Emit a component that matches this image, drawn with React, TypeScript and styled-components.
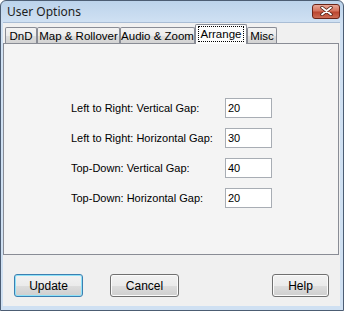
import React from "react";
import styled, { createGlobalStyle } from "styled-components";

const GlobalStyle = createGlobalStyle`
  html, body {
    margin: 0;
    padding: 0;
    background: #ffffff;
  }
`;

const Window = styled.div`
  width: 344px;
  height: 311px;
  box-sizing: border-box;
  border: 1px solid #4c5d73;
  border-radius: 6px 6px 0 0;
  background: linear-gradient(to bottom, #bcd3eb 0px, #d0e1f3 22px, #cfe0f2 100%);
  display: flex;
  flex-direction: column;
  padding: 0 3px 4px 2px;
  font-family: "Liberation Sans", Arial, sans-serif;
  white-space: nowrap;
`;

const TitleBar = styled.div`
  height: 21px;
  display: flex;
  align-items: center;
  justify-content: space-between;
  padding-left: 4px;
`;

const Title = styled.span`
  font-family: "Noto Sans", "Open Sans", sans-serif;
  font-size: 12px;
  color: #1e1e1e;
  margin-top: -1px;
`;

const CloseButton = styled.div`
  width: 28px;
  height: 15px;
  margin-top: -1px;
  box-sizing: border-box;
  border: 1px solid #6b2418;
  border-radius: 3px;
  background: linear-gradient(to bottom, #e9a797 0%, #d4735e 45%, #bb4630 55%, #cc6c55 100%);
  display: flex;
  align-items: center;
  justify-content: center;
`;

const Client = styled.div`
  flex: 1;
  background: #f0f0f0;
  border-top: 1px solid #a9bdd5;
  display: flex;
  flex-direction: column;
`;

const TabStrip = styled.div`
  display: flex;
  align-items: flex-end;
  height: 20px;
  padding-left: 2px;
  position: relative;
  z-index: 1;
`;

const Tab = styled.div<{ $active?: boolean; $w: number }>`
  box-sizing: border-box;
  width: ${(p) => p.$w}px;
  height: ${(p) => (p.$active ? "20px" : "16px")};
  margin-bottom: ${(p) => (p.$active ? "-1px" : "0")};
  border: 1px solid #898c95;
  border-bottom: none;
  border-radius: 2px 2px 0 0;
  background: ${(p) =>
    p.$active
      ? "#fcfcfc"
      : "linear-gradient(to bottom, #f3f3f3 0%, #ececec 50%, #dedede 51%, #d3d3d3 100%)"};
  font-size: 11.5px;
  color: #000;
  display: flex;
  align-items: center;
  justify-content: center;
  position: relative;
  z-index: ${(p) => (p.$active ? 2 : 0)};
`;

const FocusRing = styled.span`
  border: 1px dotted #000;
  padding: 0 2px;
  line-height: 14px;
  margin-top: -1px;
`;

const Panel = styled.div`
  height: 212px;
  margin-right: 1px;
  box-sizing: border-box;
  border: 1px solid #898c95;
  background: #f4f4f4;
  display: flex;
  flex-direction: column;
  padding: 54px 0 0 67px;
  gap: 10px;
`;

const Row = styled.div`
  display: flex;
  align-items: center;
  height: 20px;
`;

const Label = styled.span`
  width: 154px;
  font-size: 11px;
  color: #000;
`;

const NumberBox = styled.div`
  width: 47px;
  height: 20px;
  box-sizing: border-box;
  border: 1px solid #a8adb4;
  background: #fff;
  font-size: 11px;
  padding-left: 2px;
  display: flex;
  align-items: center;
`;

const ButtonRow = styled.div`
  display: flex;
  align-items: center;
  padding: 19px 11px 0 11px;
  gap: 27px;
`;

const Button = styled.div<{ $default?: boolean; $push?: boolean }>`
  width: ${(p) => (p.$push ? "57px" : "69px")};
  height: 23px;
  box-sizing: border-box;
  margin-left: ${(p) => (p.$push ? "auto" : "0")};
  border: 1px solid ${(p) => (p.$default ? "#3c7fb1" : "#707070")};
  border-radius: 3px;
  box-shadow: ${(p) => (p.$default ? "inset 0 0 0 1px #8fe2f8" : "inset 0 0 0 1px #fbfbfb")};
  background: linear-gradient(to bottom, #f2f2f2 0%, #ebebeb 50%, #dddddd 51%, #cfcfcf 100%);
  font-size: 12px;
  color: #000;
  display: flex;
  align-items: center;
  justify-content: center;
`;

const rows = [
  { label: "Left to Right: Vertical Gap:", value: "20" },
  { label: "Left to Right: Horizontal Gap:", value: "30" },
  { label: "Top-Down: Vertical Gap:", value: "40" },
  { label: "Top-Down: Horizontal Gap:", value: "20" },
];

const tabs = [
  { name: "DnD", w: 32 },
  { name: "Map & Rollover", w: 83 },
  { name: "Audio & Zoom", w: 75 },
  { name: "Arrange", w: 52 },
  { name: "Misc", w: 30 },
];

export default function App() {
  return (
    <>
      <GlobalStyle />
      <Window>
        <TitleBar>
          <Title>User Options</Title>
          <CloseButton>
            <svg width="13" height="10" viewBox="0 0 13 10">
              <path
                d="M2 1.5 L11 8.5 M11 1.5 L2 8.5"
                stroke="#4a1a10"
                strokeWidth="3.4"
                strokeLinecap="round"
              />
              <path
                d="M2 1.5 L11 8.5 M11 1.5 L2 8.5"
                stroke="#ffffff"
                strokeWidth="1.8"
                strokeLinecap="round"
              />
            </svg>
          </CloseButton>
        </TitleBar>
        <Client>
          <TabStrip>
            {tabs.map((t) => (
              <Tab key={t.name} $w={t.w} $active={t.name === "Arrange"}>
                {t.name === "Arrange" ? <FocusRing>{t.name}</FocusRing> : t.name}
              </Tab>
            ))}
          </TabStrip>
          <Panel>
            {rows.map((r) => (
              <Row key={r.label}>
                <Label>{r.label}</Label>
                <NumberBox>{r.value}</NumberBox>
              </Row>
            ))}
          </Panel>
          <ButtonRow>
            <Button $default>Update</Button>
            <Button>Cancel</Button>
            <Button $push>Help</Button>
          </ButtonRow>
        </Client>
      </Window>
    </>
  );
}
